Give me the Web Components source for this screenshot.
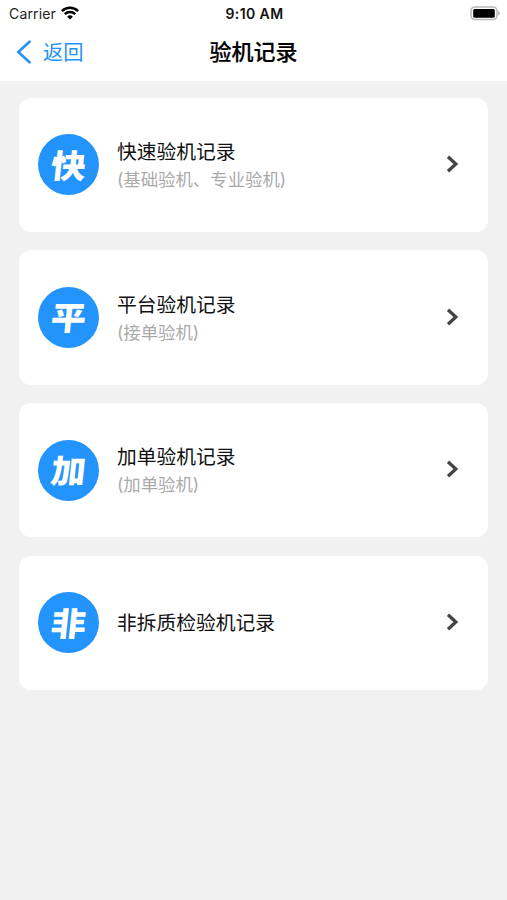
<!DOCTYPE html>
<html lang="zh-CN">
<head>
<meta charset="utf-8">
<title>验机记录</title>
<style>
	body {
		margin: 0;
		background: #f1f1f1;
		font-family: Inter, "Noto Sans CJK SC", sans-serif;
		color: #111;
	}
</style>
</head>
<body>
<app-screen>
	<status-bar slot="top" carrier="Carrier" time="9:10 AM"></status-bar>
	<nav-header slot="top" back="返回">验机记录</nav-header>
	<record-card badge="快">快速验机记录<span slot="note">(基础验机、专业验机)</span></record-card>
	<record-card badge="平">平台验机记录<span slot="note">(接单验机)</span></record-card>
	<record-card badge="加">加单验机记录<span slot="note">(加单验机)</span></record-card>
	<record-card badge="非">非拆质检验机记录</record-card>
</app-screen>

<script>
class AppScreen extends HTMLElement {

	constructor() {
		super();
		this.attachShadow({ mode: "open" });
	}

	connectedCallback() {
		this.shadowRoot.innerHTML = `
			<style>
				:host {
					display: flex;
					flex-direction: column;
					min-height: 100vh;
				}
				header {
					height: 80.5px;
					background: #fff;
				}
				main {
					display: flex;
					flex-direction: column;
					gap: 18.4px;
					padding: 17.1px 18.6px 0 19.4px;
				}
			</style>
			<header><slot name="top"></slot></header>
			<main><slot></slot></main>
		`;
	}

}

class StatusBar extends HTMLElement {

	constructor() {
		super();
		this.attachShadow({ mode: "open" });
	}

	connectedCallback() {
		this.shadowRoot.innerHTML = `
			<style>
				:host {
					display: grid;
					grid-template-columns: 1fr auto 1fr;
					align-items: center;
					height: 27px;
					padding: 0 7px 0 9px;
					box-sizing: border-box;
					font-size: 14px;
					line-height: 26px;
				}
				.carrier {
					display: flex;
					align-items: center;
					gap: 5px;
					letter-spacing: .15px;
					color: #222;
				}
				.carrier svg {
					margin-bottom: 1px;
				}
				.time {
					font-size: 14px;
					font-weight: 600;
					letter-spacing: .4px;
				}
				.battery {
					justify-self: end;
					margin-bottom: 1px;
				}
				svg {
					display: block;
				}
			</style>
			<div class="carrier">
				<span>${this.getAttribute("carrier")}</span>
				<svg width="18" height="14" viewBox="0 0 18 14" fill="none" stroke="#000" stroke-width="2.5">
					<path d="M.9 5.1a11.6 11.6 0 0 1 16.2 0M3.8 8.2a7.5 7.5 0 0 1 10.4 0"/>
					<path d="M9 13.6 6.1 10.7a4.2 4.2 0 0 1 5.8 0z" fill="#000" stroke="none"/>
				</svg>
			</div>
			<span class="time">${this.getAttribute("time")}</span>
			<svg class="battery" width="30" height="15" viewBox="0 0 30 15">
				<rect x="1" y=".9" width="26" height="12.6" rx="3.8" fill="#fff" stroke="#b8b8b8" stroke-width="1.5"/>
				<rect x="3.2" y="2.9" width="21.6" height="8.8" rx="1.5" fill="#000"/>
				<path d="M28.2 5.1c2.2 1 2.2 3.4 0 4.4z" fill="#aaa"/>
			</svg>
		`;
	}

}

class NavHeader extends HTMLElement {

	constructor() {
		super();
		this.attachShadow({ mode: "open" });
	}

	connectedCallback() {
		this.shadowRoot.innerHTML = `
			<style>
				:host {
					display: grid;
					grid-template-columns: 1fr auto 1fr;
					align-items: center;
					height: 50px;
					padding: 0 16px;
				}
				.back {
					display: flex;
					align-items: center;
					gap: 11px;
					font-size: 20.3px;
					line-height: 30px;
					color: #2492f8;
				}
				.back span {
					padding-top: 2px;
				}
				.title {
					font-size: 22px;
					font-weight: 500;
					line-height: 32px;
					-webkit-text-stroke: .2px;
					color: #000;
				}
			</style>
			<div class="back">
				<svg width="16" height="24" viewBox="0 0 16 24" fill="none" stroke="#2492f8" stroke-width="2.6" stroke-linecap="round">
					<path d="M13.5 1.7 2.3 12l11.2 10.3"/>
				</svg>
				<span>${this.getAttribute("back")}</span>
			</div>
			<div class="title"><slot></slot></div>
		`;
	}

}

class RecordCard extends HTMLElement {

	constructor() {
		super();
		this.attachShadow({ mode: "open" });
	}

	connectedCallback() {
		this.shadowRoot.innerHTML = `
			<style>
				:host {
					display: flex;
					align-items: center;
					height: 134.3px;
					padding: 0 29.4px 0 18.4px;
					box-sizing: border-box;
					border-radius: 12px;
					background: #fff;
				}
				.badge {
					display: flex;
					align-items: center;
					justify-content: center;
					width: 61px;
					height: 61px;
					border-radius: 50%;
					background: #2294fc;
					color: #fff;
				}
				.badge span {
					padding-top: 2px;
					font-size: 35px;
					font-weight: 900;
					line-height: 50px;
					transform: skewX(-6deg) scaleY(.93);
				}
				.text {
					flex: 1;
					margin-left: 18.2px;
					padding-top: 1.6px;
					font-size: 19.75px;
					line-height: 29px;
				}
				.note {
					display: block;
					font-size: 17.4px;
					line-height: 26.4px;
					color: #aaa;
				}
				svg {
					margin-bottom: 1.4px;
				}
			</style>
			<div class="badge"><span>${this.getAttribute("badge")}</span></div>
			<div class="text">
				<slot></slot>
				<slot name="note" class="note"></slot>
			</div>
			<svg width="13" height="18" viewBox="0 0 13 18" fill="none" stroke="#444" stroke-width="3.3">
				<path d="M2 1.8 9.8 9 2 16.2"/>
			</svg>
		`;
	}

}

window.customElements.define("app-screen", AppScreen);
window.customElements.define("status-bar", StatusBar);
window.customElements.define("nav-header", NavHeader);
window.customElements.define("record-card", RecordCard);
</script>
</body>
</html>
